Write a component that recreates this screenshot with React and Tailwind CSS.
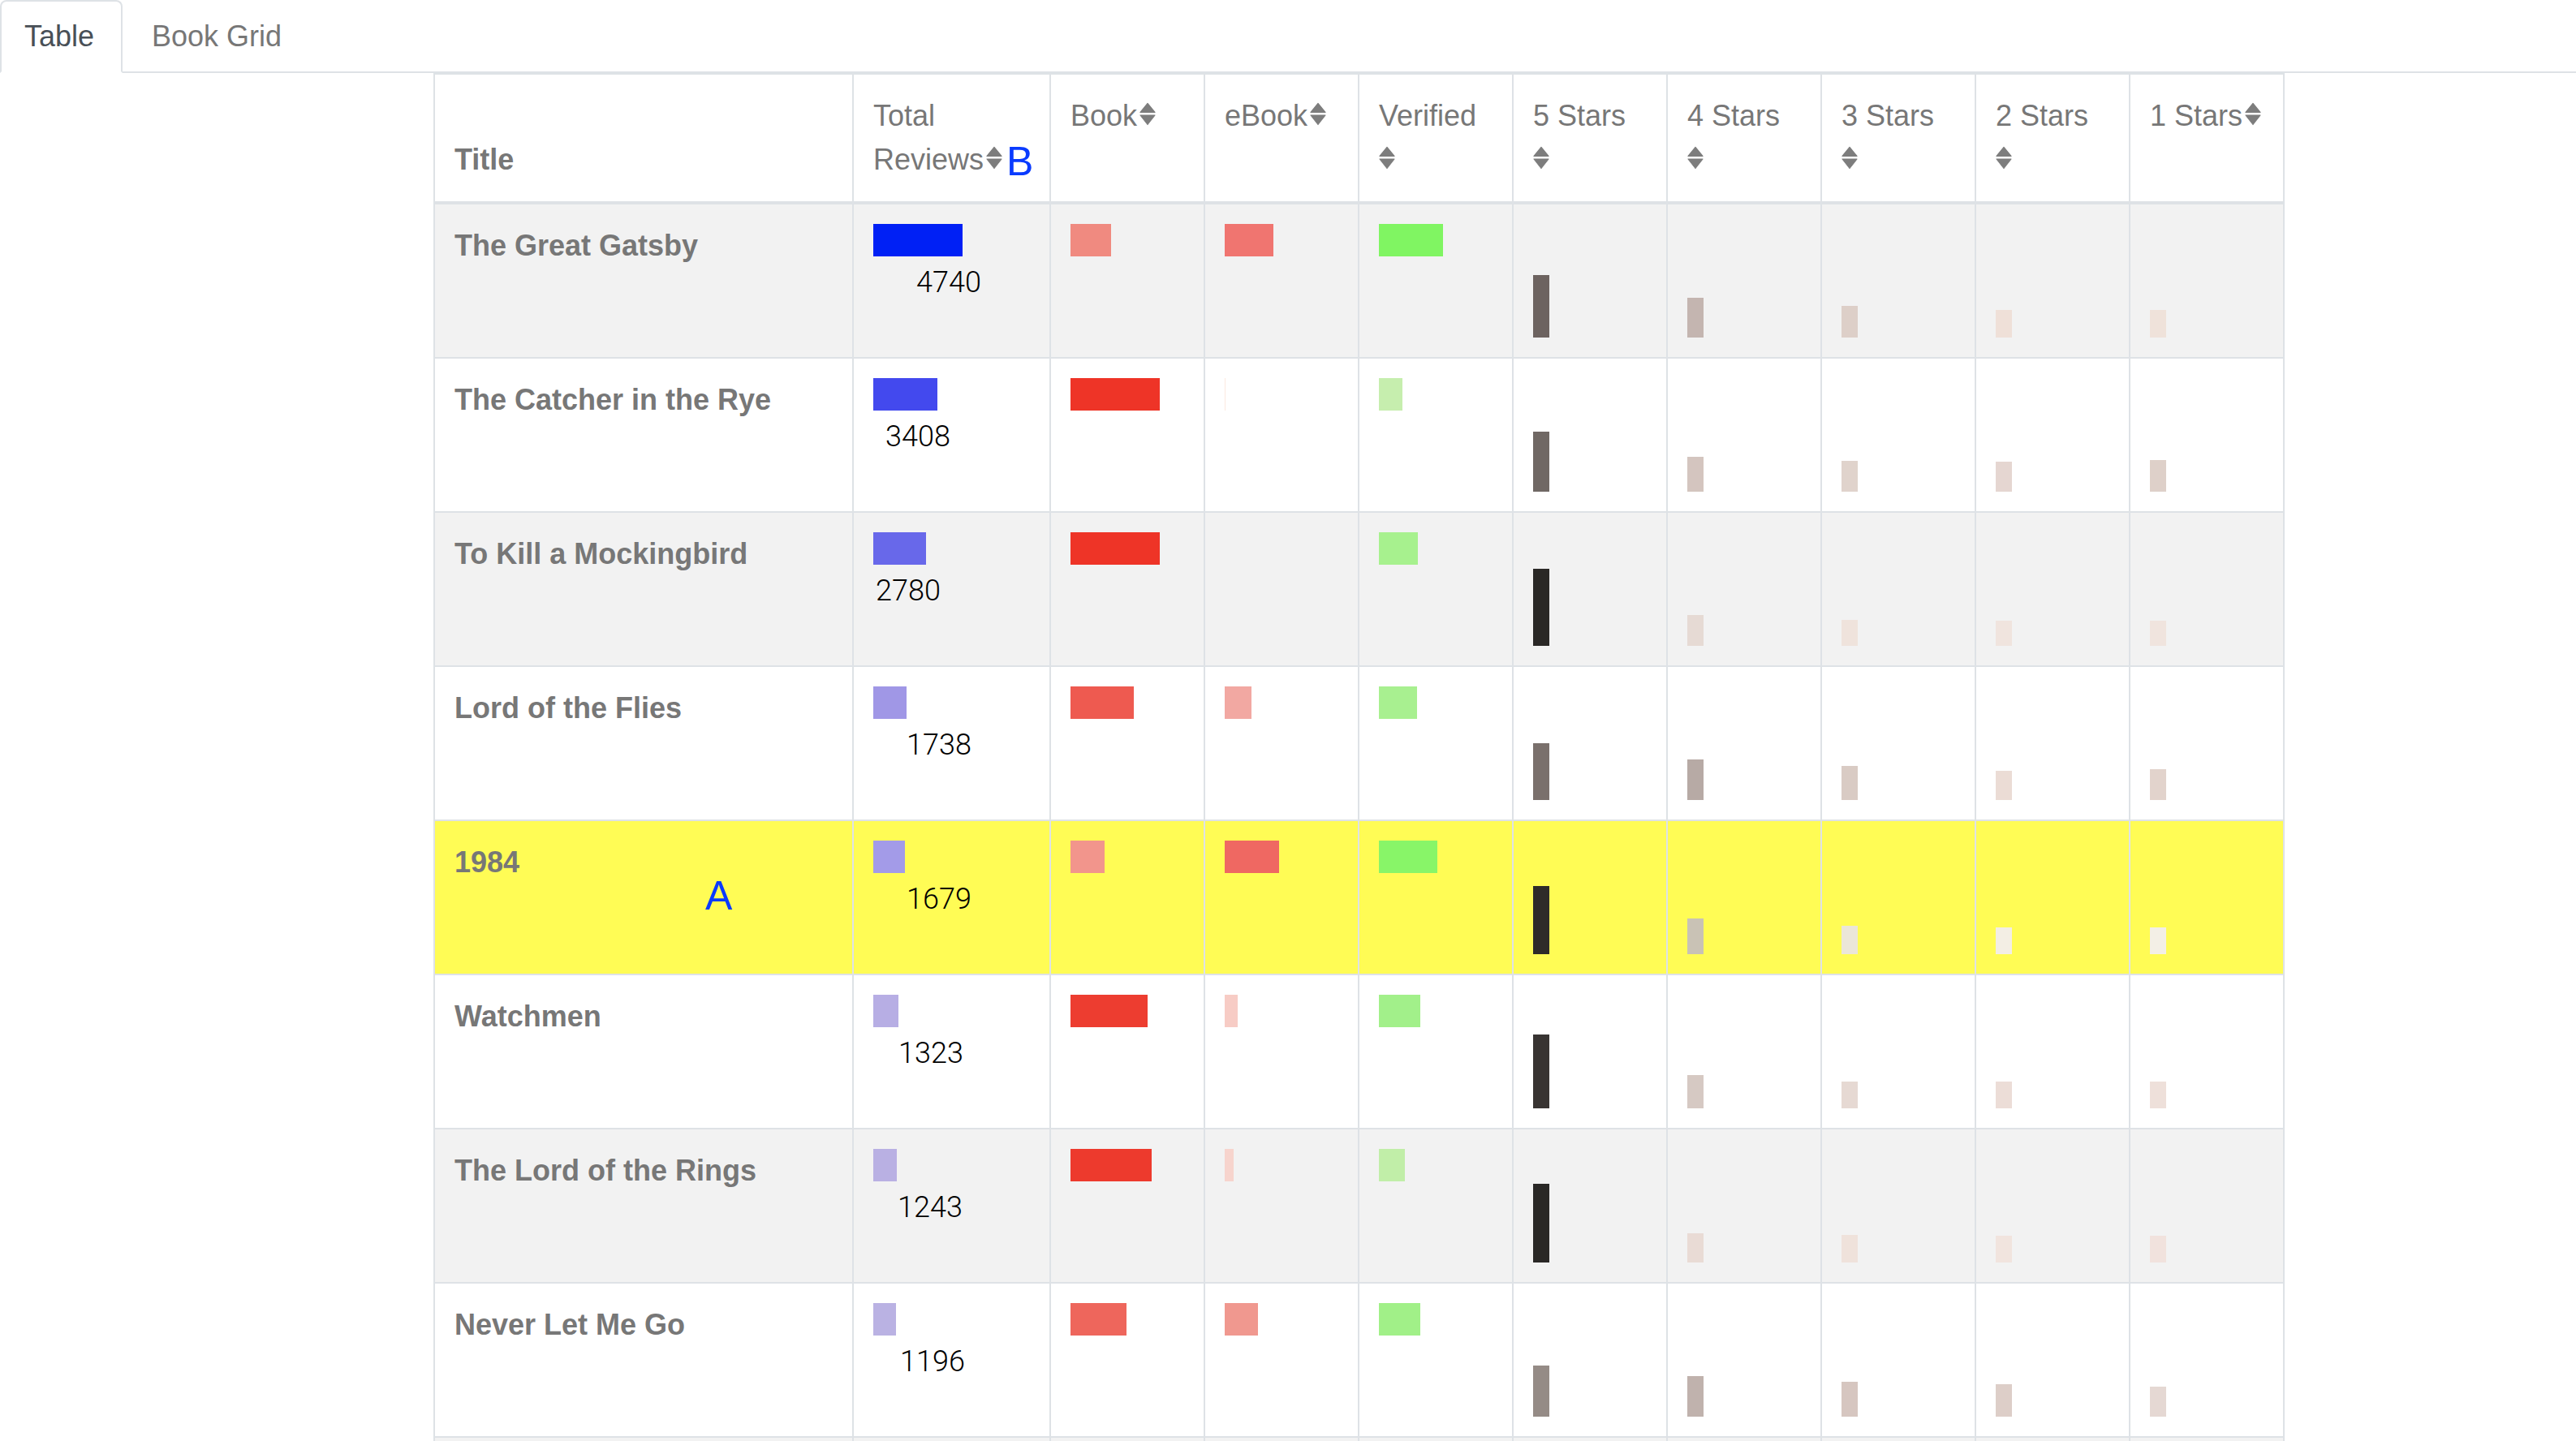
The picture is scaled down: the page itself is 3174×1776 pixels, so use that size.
import React from "react";

const SortIcon = ({ className = "" }) => (
  <svg
    width="24"
    height="29"
    viewBox="0 0 24 29"
    className={"inline-block align-baseline " + className}
  >
    <path
      d="M13 1.5 L22 12.5 L4 12.5 Z"
      fill="#7d7d7d"
      stroke="#7d7d7d"
      strokeWidth="1.2"
      strokeLinejoin="round"
    />
    <path
      d="M4 16 L22 16 L13 27.5 Z"
      fill="#7d7d7d"
      stroke="#7d7d7d"
      strokeWidth="1.2"
      strokeLinejoin="round"
    />
  </svg>
);

const rows = [
  {
    title: "The Great Gatsby",
    bg: "bg-[#f2f2f2]",
    total: 4740,
    tw: 110,
    tc: "#0020f5",
    nx: 53,
    book: [50, "#f08a80"],
    ebook: [60, "#f07570"],
    ver: [79, "#80f562"],
    stars: [
      [77, "#6d6360"],
      [49, "#c4b5b0"],
      [39, "#ddcfc8"],
      [34, "#efe0d8"],
      [34, "#efe2da"],
    ],
  },
  {
    title: "The Catcher in the Rye",
    bg: "bg-white",
    total: 3408,
    tw: 79,
    tc: "#4349ee",
    nx: 15,
    book: [110, "#ee3427"],
    ebook: [1, "#fbe9e0"],
    ver: [29, "#c6eeae"],
    stars: [
      [74, "#706864"],
      [43, "#d4c5bf"],
      [38, "#e0d3cc"],
      [37, "#e5d6d1"],
      [39, "#ded0c9"],
    ],
  },
  {
    title: "To Kill a Mockingbird",
    bg: "bg-[#f2f2f2]",
    total: 2780,
    tw: 65,
    tc: "#6868ea",
    nx: 3,
    book: [110, "#ee3427"],
    ebook: [0, "#f2f2f2"],
    ver: [48, "#a7f18e"],
    stars: [
      [95, "#2a2826"],
      [38, "#e6dad4"],
      [32, "#efe3dc"],
      [31, "#f0e4de"],
      [31, "#f0e4de"],
    ],
  },
  {
    title: "Lord of the Flies",
    bg: "bg-white",
    total: 1738,
    tw: 41,
    tc: "#a097e6",
    nx: 41,
    book: [78, "#ee5a50"],
    ebook: [33, "#f2a8a2"],
    ver: [47, "#a8f090"],
    stars: [
      [70, "#7a706c"],
      [50, "#b7aaa5"],
      [42, "#d9cbc4"],
      [36, "#ebdcd5"],
      [38, "#e2d3cc"],
    ],
  },
  {
    title: "1984",
    bg: "bg-[#fffc55]",
    total: 1679,
    tw: 39,
    tc: "#a39be8",
    nx: 41,
    book: [42, "#f2958c"],
    ebook: [67, "#ef6862"],
    ver: [72, "#88f568"],
    stars: [
      [84, "#2e2b29"],
      [44, "#c9c2b5"],
      [35, "#ebe6d8"],
      [33, "#f3eee4"],
      [33, "#f3efe6"],
    ],
  },
  {
    title: "Watchmen",
    bg: "bg-white",
    total: 1323,
    tw: 31,
    tc: "#b7aee4",
    nx: 31,
    book: [95, "#ed3d30"],
    ebook: [16, "#f7ccc5"],
    ver: [51, "#a2f08a"],
    stars: [
      [91, "#383432"],
      [41, "#d6c9c3"],
      [33, "#e6d9d3"],
      [33, "#ecddd7"],
      [33, "#eee0da"],
    ],
  },
  {
    title: "The Lord of the Rings",
    bg: "bg-[#f2f2f2]",
    total: 1243,
    tw: 29,
    tc: "#b9b0e3",
    nx: 30,
    book: [100, "#ed3a2d"],
    ebook: [11, "#f7d4cd"],
    ver: [32, "#c1eea8"],
    stars: [
      [97, "#2a2826"],
      [36, "#e9dbd5"],
      [34, "#efe2db"],
      [33, "#f1e4de"],
      [33, "#f1e2dd"],
    ],
  },
  {
    title: "Never Let Me Go",
    bg: "bg-white",
    total: 1196,
    tw: 28,
    tc: "#bab2e3",
    nx: 33,
    book: [69, "#ee665c"],
    ebook: [41, "#f0988f"],
    ver: [51, "#a1f088"],
    stars: [
      [63, "#958b86"],
      [50, "#c0b2ad"],
      [43, "#d6c6c0"],
      [40, "#ddcec8"],
      [37, "#e5d8d3"],
    ],
  },
];

const Bar = ({ w, c }) => (
  <div className="h-[40px]" style={{ width: w, backgroundColor: c }} />
);

function HeaderRow() {
  const th =
    "h-full border-l-2 border-[#dee2e6] p-6 text-[36px] leading-[54px] text-[#777777] whitespace-nowrap";
  return (
    <div className="flex h-[162px] border-t-2 border-b-4 border-[#dee2e6]">
      <div className={th + " w-[516px] flex flex-col justify-end font-bold"}>
        Title
      </div>
      <div className={th + " w-[243px]"}>
        <div>Total</div>
        <div>
          Reviews
          <SortIcon />
        </div>
      </div>
      <div className={th + " w-[190px]"}>
        <div>
          Book
          <SortIcon />
        </div>
      </div>
      <div className={th + " w-[190px]"}>
        <div>
          eBook
          <SortIcon />
        </div>
      </div>
      <div className={th + " w-[190px]"}>
        <div>Verified</div>
        <div>
          <SortIcon className="-ml-[3px]" />
        </div>
      </div>
      {["5 Stars", "4 Stars", "3 Stars", "2 Stars"].map((s) => (
        <div key={s} className={th + " w-[190px]"}>
          <div>{s}</div>
          <div>
            <SortIcon className="-ml-[3px]" />
          </div>
        </div>
      ))}
      <div className={th + " w-[190px]"}>
        <div>
          1 Stars
          <SortIcon />
        </div>
      </div>
    </div>
  );
}

function DataRow({ r, first }) {
  const td = "h-full border-l-2 border-[#dee2e6] p-6";
  return (
    <div
      className={
        "flex " +
        r.bg +
        (first ? " h-[188px]" : " h-[190px] border-t-2 border-[#dee2e6]")
      }
    >
      <div
        className={
          td +
          " w-[516px] text-[36px] leading-[54px] font-bold text-[#777777] whitespace-nowrap"
        }
      >
        {r.title}
      </div>
      <div className={td + " w-[243px]"}>
        <Bar w={r.tw} c={r.tc} />
        <div
          className="mt-[14px] font-['Roboto',sans-serif] font-light text-[36px] leading-[36px] text-black"
          style={{ marginLeft: r.nx }}
        >
          {r.total}
        </div>
      </div>
      <div className={td + " w-[190px]"}>
        <Bar w={r.book[0]} c={r.book[1]} />
      </div>
      <div className={td + " w-[190px]"}>
        <Bar w={r.ebook[0]} c={r.ebook[1]} />
      </div>
      <div className={td + " w-[190px]"}>
        <Bar w={r.ver[0]} c={r.ver[1]} />
      </div>
      {r.stars.map(([h, c], i) => (
        <div key={i} className={td + " w-[190px] flex items-end"}>
          <div className="w-[20px]" style={{ height: h, backgroundColor: c }} />
        </div>
      ))}
    </div>
  );
}

export default function App() {
  return (
    <div className="relative w-full h-[1776px] overflow-hidden bg-white font-['Liberation_Sans',Arial,sans-serif]">
      <div className="flex items-start h-[90px] border-b-2 border-[#dee2e6] text-[36px] leading-[54px]">
        <div className="-mb-[2px] h-[90px] border-2 border-[#dee2e6] border-b-white rounded-t-[8px] bg-white pl-[28px] pr-[33px] pt-[16px] text-[#495057]">
          Table
        </div>
        <div className="pl-[36px] pt-[18px] text-[#777777]">Book Grid</div>
      </div>

      <div className="ml-[534px] w-[2281px] border-r-2 border-b-2 border-[#dee2e6]">
        <HeaderRow />
        {rows.map((r, i) => (
          <DataRow key={r.title} r={r} first={i === 0} />
        ))}
        <div className="flex h-[190px] border-t-2 border-[#dee2e6] bg-[#f2f2f2]">
          <div className="h-full w-[516px] border-l-2 border-[#dee2e6]" />
          <div className="h-full w-[243px] border-l-2 border-[#dee2e6]" />
          {[0, 1, 2, 3, 4, 5, 6, 7].map((i) => (
            <div key={i} className="h-full w-[190px] border-l-2 border-[#dee2e6]" />
          ))}
        </div>
      </div>

      <span className="absolute left-[869px] top-[1079px] text-[50px] leading-[50px] text-[#0a3bff]">
        A
      </span>
      <span className="absolute left-[1240px] top-[174px] text-[50px] leading-[50px] text-[#0a3bff]">
        B
      </span>
    </div>
  );
}
